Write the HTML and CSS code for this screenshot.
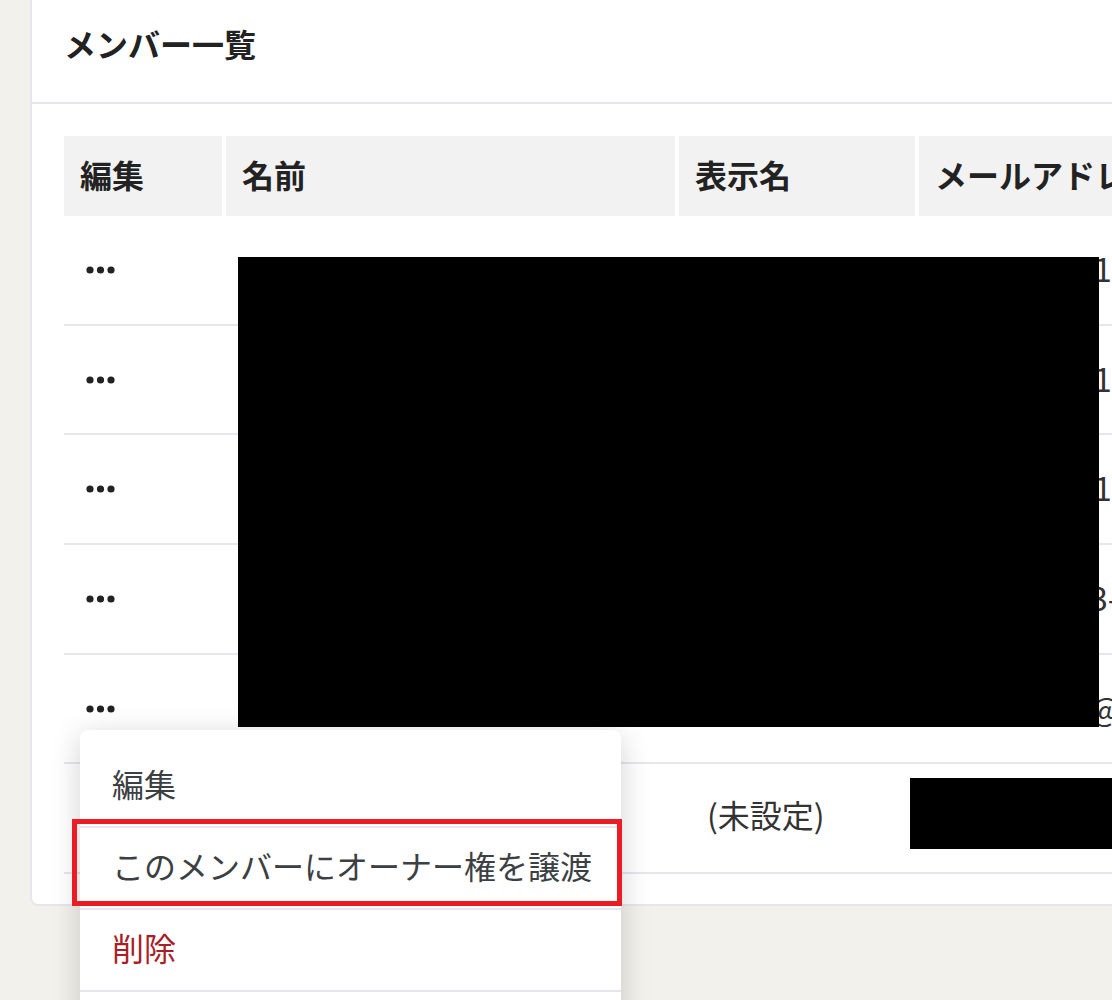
FILE: index.html
```html
<!DOCTYPE html>
<html lang="ja">
<head>
    <meta charset="UTF-8">
    <meta name="viewport" content="width=device-width, initial-scale=1.0">
    <title>メンバー一覧</title>
    <link rel="stylesheet" href="styles.css">
</head>
<body>

    <div class="page">
        <section class="card">
            <h1 class="card-title">メンバー一覧</h1>

            <div class="card-body">
                <div class="table-wrap">
                    <table class="members">
                        <thead>
                            <tr>
                                <th class="col-edit">編集</th>
                                <th class="col-name">名前</th>
                                <th class="col-display">表示名</th>
                                <th class="col-mail">メールアドレス</th>
                                <th class="col-role">権限</th>
                            </tr>
                        </thead>
                        <tbody>
                            <tr>
                                <td><button class="more"><svg width="30" height="8" viewBox="0 0 30 8"><circle cx="4" cy="4" r="3.6"/><circle cx="14.5" cy="4" r="3.6"/><circle cx="25" cy="4" r="3.6"/></svg></button></td>
                                <td></td>
                                <td></td>
                                <td class="mail"><span class="shift">1</span></td>
                                <td></td>
                            </tr>
                            <tr>
                                <td><button class="more"><svg width="30" height="8" viewBox="0 0 30 8"><circle cx="4" cy="4" r="3.6"/><circle cx="14.5" cy="4" r="3.6"/><circle cx="25" cy="4" r="3.6"/></svg></button></td>
                                <td></td>
                                <td></td>
                                <td class="mail"><span class="shift">1</span></td>
                                <td></td>
                            </tr>
                            <tr>
                                <td><button class="more"><svg width="30" height="8" viewBox="0 0 30 8"><circle cx="4" cy="4" r="3.6"/><circle cx="14.5" cy="4" r="3.6"/><circle cx="25" cy="4" r="3.6"/></svg></button></td>
                                <td></td>
                                <td></td>
                                <td class="mail"><span class="shift">1</span></td>
                                <td></td>
                            </tr>
                            <tr>
                                <td><button class="more"><svg width="30" height="8" viewBox="0 0 30 8"><circle cx="4" cy="4" r="3.6"/><circle cx="14.5" cy="4" r="3.6"/><circle cx="25" cy="4" r="3.6"/></svg></button></td>
                                <td></td>
                                <td></td>
                                <td class="mail">3-</td>
                                <td></td>
                            </tr>
                            <tr>
                                <td><button class="more"><svg width="30" height="8" viewBox="0 0 30 8"><circle cx="4" cy="4" r="3.6"/><circle cx="14.5" cy="4" r="3.6"/><circle cx="25" cy="4" r="3.6"/></svg></button></td>
                                <td></td>
                                <td></td>
                                <td class="mail">@</td>
                                <td></td>
                            </tr>
                            <tr>
                                <td><button class="more"><svg width="30" height="8" viewBox="0 0 30 8"><circle cx="4" cy="4" r="3.6"/><circle cx="14.5" cy="4" r="3.6"/><circle cx="25" cy="4" r="3.6"/></svg></button></td>
                                <td></td>
                                <td class="display">(未設定)</td>
                                <td></td>
                                <td></td>
                            </tr>
                        </tbody>
                    </table>

                    <!-- 黒塗り -->
                    <div class="redact redact-main"></div>
                    <div class="redact redact-mail"></div>

                    <!-- 編集メニュー -->
                    <div class="menu">
                        <ul class="menu-list">
                            <li class="menu-item">編集</li>
                            <li class="menu-item">このメンバーにオーナー権を譲渡</li>
                            <li class="menu-item danger">削除</li>
                            <li class="menu-item"></li>
                        </ul>
                        <div class="highlight"></div>
                    </div>
                </div>
            </div>
        </section>
    </div>

</body>
</html>
```

FILE: styles.css
```css
body {
    margin: 0;
    background-color: #f3f1eb;
    font-family: "Noto Sans CJK JP", "Noto Sans", sans-serif;
    color: #222;
}

.page {
    height: 100vh;
    overflow: hidden;
}

.card {
    margin-left: 30px;
    width: 1300px;
    background-color: #fff;
    border: 2px solid #e7e7eb;
    border-top: none;
    border-radius: 0 0 8px 8px;
}

.card-title {
    margin: 0;
    padding: 19px 32px 35px;
    font-size: 32px;
    line-height: 48px;
    font-weight: 700;
    border-bottom: 2px solid #e7e7eb;
}

.card-body {
    padding: 32px 32px 30px;
}

.table-wrap {
    position: relative;
}

.members {
    border-collapse: separate;
    border-spacing: 0;
    table-layout: fixed;
    width: 1236px;
    font-size: 32px;
}

.members th {
    box-sizing: border-box;
    height: 80px;
    padding: 0 16px 4px;
    text-align: left;
    font-weight: 700;
    background-color: #f2f2f2;
    border-right: 4px solid #fff;
    white-space: nowrap;
    overflow: hidden;
}

.col-edit { width: 162px; }
.col-name { width: 453px; }
.col-display { width: 240px; }
.col-mail { width: 300px; }
.col-role { width: 81px; }

.members td {
    box-sizing: border-box;
    height: 109.7px;
    padding: 0 24px;
    border-bottom: 2px solid #e6e6eb;
    color: #333;
    white-space: nowrap;
    overflow: hidden;
}

.members td.display {
    padding-left: 28px;
    padding-bottom: 8px;
}

.members td.mail {
    padding-left: 171px;
    padding-bottom: 4px;
}

.shift {
    margin-left: 4px;
}

.more {
    display: block;
    margin-left: -2px;
    padding: 0;
    border: none;
    background: none;
    fill: #222;
    cursor: pointer;
}

.more svg {
    display: block;
}

/* 黒塗り */
.redact {
    position: absolute;
    background-color: #000;
}

.redact-main {
    left: 174px;
    top: 121px;
    width: 861px;
    height: 470px;
}

.redact-mail {
    left: 846px;
    top: 642px;
    width: 300px;
    height: 71px;
}

/* 編集メニュー */
.menu {
    position: absolute;
    left: 16px;
    top: 594px;
    width: 541px;
    background-color: #fff;
    border-radius: 8px;
    box-shadow: 0 6px 30px rgba(0, 0, 0, 0.18);
}

.menu-list {
    margin: 0;
    padding: 16px 0;
    list-style: none;
}

.menu-item {
    height: 80px;
    padding: 0 32px;
    font-size: 32px;
    line-height: 74px;
    color: #3c4043;
    border-bottom: 2px solid #e6e6eb;
    white-space: nowrap;
}

.menu-item.danger {
    color: #a81f28;
}

.highlight {
    position: absolute;
    left: -8px;
    top: 89px;
    width: 550px;
    height: 87px;
    box-sizing: border-box;
    border: 5px solid #ec1c24;
}
```
